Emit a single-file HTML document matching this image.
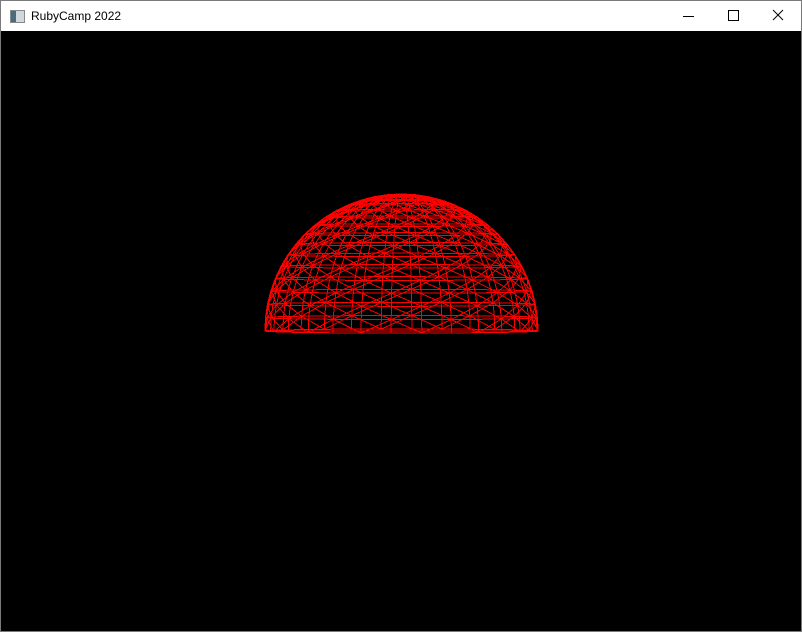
<!DOCTYPE html>
<html><head><meta charset="utf-8">
<style>
html,body{margin:0;padding:0;width:802px;height:632px;overflow:hidden;background:#000}
.win{position:absolute;left:0;top:0;width:800px;height:630px;border:1px solid #7a7a7a;background:#000}
.tb{position:absolute;left:0;top:0;width:800px;height:30px;background:#fff}
.title{position:absolute;left:30px;top:8px;font:12px "Liberation Sans",sans-serif;color:#000}
.ico{position:absolute;left:9px;top:9px;width:13px;height:11px;border:1px solid #888;background:linear-gradient(90deg,#4a6c80 0 5px,#cfd8dc 5px)}
svg{position:absolute;left:0;top:0}
</style></head><body>
<div class="win">
<div class="tb">
<div class="ico"></div>
<div class="title">RubyCamp 2022</div>
<svg width="800" height="30">
<line x1="682" y1="15.5" x2="693" y2="15.5" stroke="#000" stroke-width="1"/>
<rect x="727.5" y="9.5" width="10" height="10" fill="none" stroke="#000"/>
<line x1="772" y1="9" x2="782" y2="19" stroke="#000"/>
<line x1="782" y1="9" x2="772" y2="19" stroke="#000"/>
</svg>
</div>
<svg id="s" width="800" height="630" style="top:0" shape-rendering="crispEdges"></svg>
</div>
<script>
(function(){
var cx=400.5,cy=330,R=137,L=28,M=16,rot=0.3;
function P(i,j){var th=(i/M)*Math.PI/2,ph=j/L*2*Math.PI+rot;
var x=R*Math.cos(th)*Math.cos(ph),y=R*Math.sin(th),z=R*Math.cos(th)*Math.sin(ph);
return [cx+x,cy-y+z*0.015];}
var d="";
function ln(a,b){d+="M"+a[0].toFixed(1)+" "+a[1].toFixed(1)+"L"+b[0].toFixed(1)+" "+b[1].toFixed(1);}
for(var i=0;i<M;i++)for(var j=0;j<L;j++){
var a=P(i,j),b=P(i,j+1),c=P(i+1,j),e=P(i+1,j+1);
ln(a,b);ln(a,c);if((i+j)%2)ln(a,e);else ln(b,c);}
ln([cx-R,cy],[cx+R,cy]);
document.getElementById("s").innerHTML='<path d="'+d+'" stroke="#ff0000" stroke-width="1" fill="none"/>';
})();
</script>
</body></html>
